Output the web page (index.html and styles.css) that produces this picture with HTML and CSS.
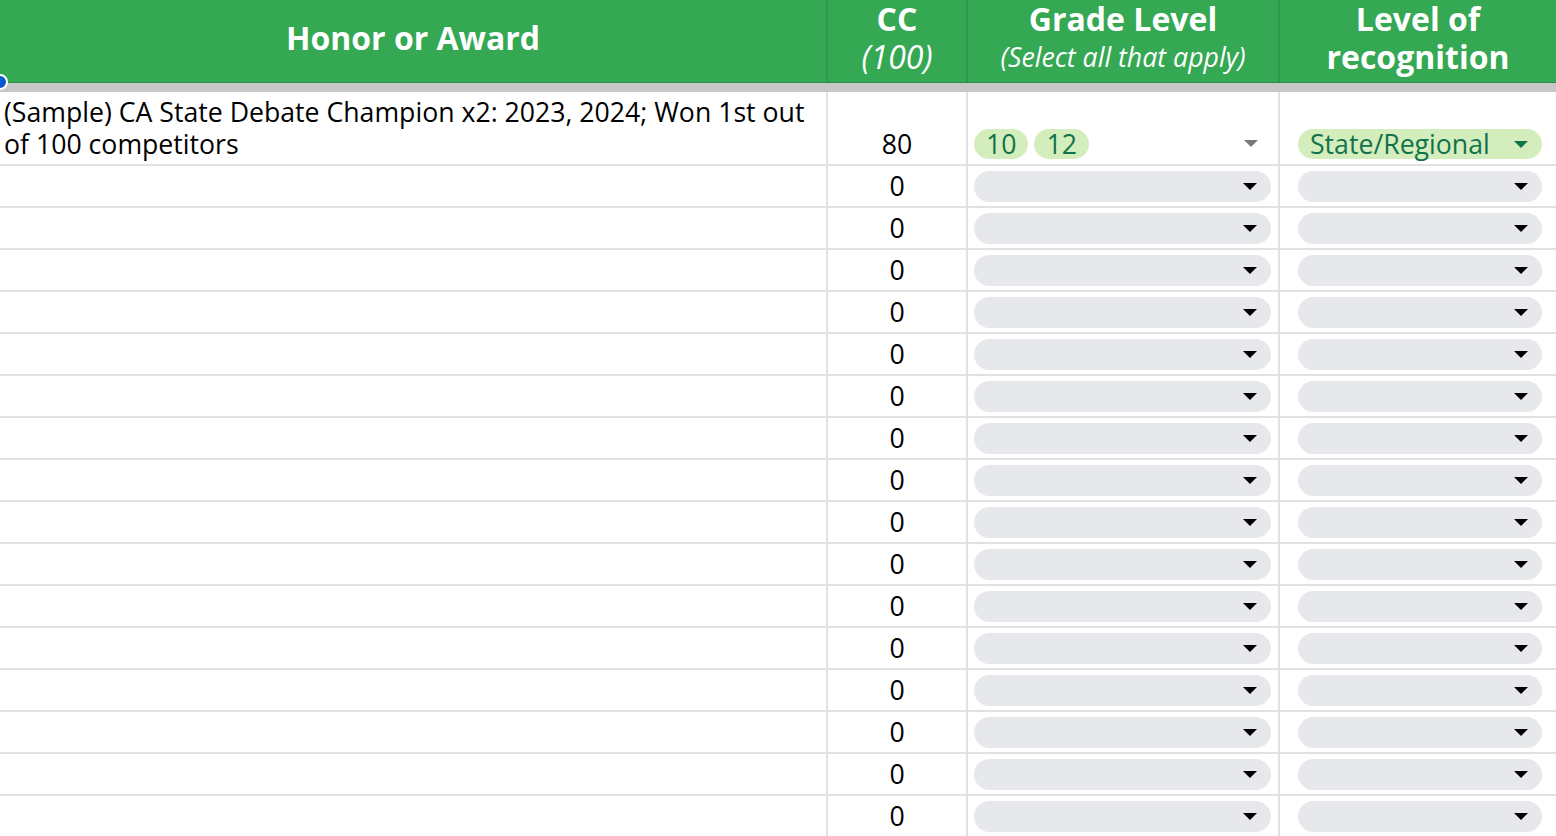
FILE: index.html
```html
<!DOCTYPE html>
<html>
<head>
<meta charset="utf-8">
<link rel="stylesheet" href="styles.css">
</head>
<body>
<div class="sheet">
  <div class="head">
    <div class="hcell c1"><span class="hb">Honor or Award</span></div>
    <div class="hcell c2"><span class="hb">CC</span><span class="hi">(100)</span></div>
    <div class="hcell c3"><span class="hb">Grade Level</span><span class="hi small">(Select all that apply)</span></div>
    <div class="hcell c4"><span class="hb two">Level of recognition</span></div>
    <span class="dot"></span>
  </div>
  <div class="freeze"></div>
  <div class="body" id="body">
    <div class="row first">
      <div class="cell c1 txt">(Sample) CA State Debate Champion x2: 2023, 2024; Won 1st out of 100 competitors</div>
      <div class="cell c2 num">80</div>
      <div class="cell c3 sel">
        <div class="chips"><span class="chip">10</span><span class="chip">12</span></div>
        <span class="arrow grey"></span>
      </div>
      <div class="cell c4 sel">
        <div class="pill green"><span class="ptext">State/Regional</span><span class="arrow dg"></span></div>
      </div>
    </div>
  </div>
</div>
<script src="app.js"></script>
</body>
</html>
```

FILE: app.js
```js
var body = document.getElementById('body');
for (var i = 0; i < 16; i++) {
  var r = document.createElement('div');
  r.className = 'row';
  r.innerHTML = '<div class="cell c1"></div><div class="cell c2 num">0</div>' +
    '<div class="cell c3 sel"><div class="pill"><span class="arrow"></span></div></div>' +
    '<div class="cell c4 sel"><div class="pill"><span class="arrow"></span></div></div>';
  body.appendChild(r);
}
```

FILE: styles.css
```css
html, body {
  margin: 0;
  padding: 0;
  background: #fff;
  overflow: hidden;
}
body {
  font-family: "Open Sans", "Liberation Sans", sans-serif;
  color: #000;
}
.sheet {
  width: 1556px;
}
.head {
  position: relative;
  display: flex;
  height: 82px;
  background: #34a853;
  border-bottom: 1px solid #2b8e46;
}
.hcell {
  display: flex;
  flex-direction: column;
  align-items: center;
  justify-content: center;
  color: #fff;
  border-right: 2px solid #2f9a4c;
  box-sizing: border-box;
  text-align: center;
  padding-bottom: 6px;
}
.hb {
  display: block;
  font-weight: 700;
  font-size: 32px;
  line-height: 38px;
  height: 38px;
  overflow: visible;
}
.hb.two {
  width: 230px;
  height: auto;
}
.hi {
  display: block;
  font-style: italic;
  font-size: 32px;
  line-height: 38px;
  height: 38px;
}
.hi.small {
  font-size: 26.7px;
}
.c1 { width: 828px; }
.c2 { width: 140px; }
.c3 { width: 312px; }
.c4 { width: 276px; border-right: none; }
.dot {
  position: absolute;
  left: -8px;
  bottom: -8px;
  width: 12px;
  height: 12px;
  border-radius: 50%;
  background: #0b57d0;
  border: 2px solid #fff;
}
.freeze {
  height: 9px;
  background: #c7c7c7;
}
.row {
  display: flex;
  height: 42px;
  border-bottom: 2px solid #e1e1e1;
  box-sizing: border-box;
}
.row.first {
  height: 74px;
}
.cell {
  border-right: 2px solid #e1e1e1;
  box-sizing: border-box;
  height: 100%;
}
.cell.c4 { border-right: none; }
.txt {
  font-size: 26.67px;
  line-height: 32px;
  padding: 0 4px 4px 4px;
  display: flex;
  align-items: flex-end;
}
.num {
  font-size: 26.67px;
  display: flex;
  align-items: center;
  justify-content: center;
  padding-bottom: 2px;
}
.row.first .num {
  align-items: flex-end;
  line-height: 32px;
  padding-bottom: 4px;
}
.sel {
  display: flex;
  align-items: center;
  padding: 0 6px;
}
.c3.sel { padding: 0 7px 0 6px; }
.c4.sel { padding: 0 14px 0 18px; }
.pill {
  flex: 1;
  height: 31px;
  border-radius: 16px;
  background: #e7e8eb;
  display: flex;
  align-items: center;
  justify-content: flex-end;
  padding-right: 14px;
}
.pill.green {
  background: #d4edbc;
  justify-content: space-between;
  padding-left: 12px;
  height: 30px;
}
.row.first .sel {
  align-items: flex-end;
  padding-bottom: 5px;
}
.ptext {
  color: #11734b;
  font-size: 26.67px;
  line-height: 30px;
}
.chips {
  display: flex;
  gap: 6px;
  flex: 1;
}
.chip {
  background: #d4edbc;
  color: #11734b;
  font-size: 26.67px;
  line-height: 30px;
  height: 30px;
  padding: 0 12px;
  border-radius: 15px;
}
.arrow {
  width: 0;
  height: 0;
  border-left: 7px solid transparent;
  border-right: 7px solid transparent;
  border-top: 7px solid #000;
}
.arrow.grey {
  border-top-color: #7a7a7a;
  margin: 0 13px 12px 0;
}
.arrow.dg {
  border-top-color: #11734b;
}
```
